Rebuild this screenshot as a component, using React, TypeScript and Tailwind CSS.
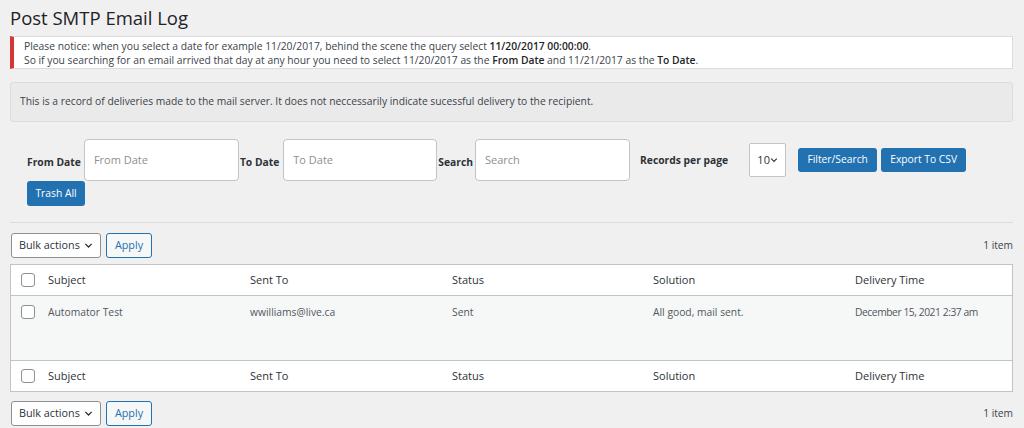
import type { ReactNode } from 'react';

const font = { fontFamily: '"Open Sans", "Noto Sans", Arial, sans-serif' };

function Check() {
  return (
    <span className="block w-[14px] h-[14px] rounded-[3px] border border-[#8c8f94] bg-white" />
  );
}

function Chevron() {
  return (
    <svg width="9" height="9" viewBox="0 0 10 10" className="ml-[4px]">
      <path d="M1.5 3.2 5 6.7 8.5 3.2" fill="none" stroke="#2c3338" strokeWidth="1.5" />
    </svg>
  );
}

function BulkBar() {
  return (
    <div className="flex items-center justify-between pr-[11px]">
      <div className="flex items-center">
        <div className="ml-[1px] h-[25px] w-[90px] flex items-center whitespace-nowrap px-[7px] border border-[#8c8f94] rounded-[3px] bg-white text-[10.8px] text-[#2c3338]">
          Bulk actions
          <Chevron />
        </div>
        <div className="ml-[5px] h-[25px] w-[46px] flex items-center justify-center border border-[#2271b1] rounded-[3px] bg-[#f6f7f7] text-[10.8px] text-[#2271b1]">
          Apply
        </div>
      </div>
      <span className="text-[10.2px] text-[#3c434a]">1 item</span>
    </div>
  );
}

function Row({ cells, body }: { cells: ReactNode[]; body?: boolean }) {
  return (
    <div
      className={
        'grid grid-cols-[27px_202px_202px_201px_202px_1fr] ' +
        (body
          ? 'h-[64px] items-start pt-[9px] bg-[#f6f7f7] text-[10.3px] text-[#50575e]'
          : 'h-[30px] items-center bg-white text-[11px] text-[#2c3338]')
      }
    >
      <div className="pl-[10px]">
        <Check />
      </div>
      {cells.map((c, i) => (
        <div key={i} className="pl-[10px] leading-[14px] whitespace-nowrap">
          {c}
        </div>
      ))}
    </div>
  );
}

const headers = ['Subject', 'Sent To', 'Status', 'Solution', 'Delivery Time'];

export default function App() {
  return (
    <div style={font} className="w-[1024px] h-[428px] overflow-hidden bg-[#f0f0f1] text-[#3c434a]">
      <h1 className="pl-[10px] pt-[5px] text-[18.5px] leading-[26px] text-[#1d2327]">Post SMTP Email Log</h1>

      {/* notice */}
      <div className="mt-[5px] ml-[10px] w-[1003px] h-[33px] bg-white border border-[#dcdcde] border-l-[4px] border-l-[#d63638] pl-[10px] pt-[2px] text-[10.3px] leading-[14px] text-[#3c434a]">
        <div>
          Please notice: when you select a date for example 11/20/2017, behind the scene the query select{' '}
          <b className="font-semibold text-[#1d2327]">11/20/2017 00:00:00</b>.
        </div>
        <div>
          So if you searching for an email arrived that day at any hour you need to select 11/20/2017 as the{' '}
          <b className="font-semibold text-[#1d2327]">From Date</b> and 11/21/2017 as the{' '}
          <b className="font-semibold text-[#1d2327]">To Date</b>.
        </div>
      </div>

      {/* info */}
      <div className="mt-[13px] ml-[10px] w-[1003px] h-[40px] flex items-center bg-[#eaeaeb] border border-[#dcdcde] rounded-[3px] pl-[9px] text-[10.3px] text-[#3c434a]">
        This is a record of deliveries made to the mail server. It does not neccessarily indicate sucessful delivery to the recipient.
      </div>

      {/* filters */}
      <div className="mt-[17px] ml-[27px] flex flex-wrap items-center text-[10.3px]">
        <span className="mt-[5px] font-bold text-[#2c3338]">From Date</span>
        <div className="ml-[3px] w-[155px] h-[42px] flex items-center pl-[9px] bg-white border border-[#c3c4c7] rounded-[4px] text-[11px] text-[#8c8f94]">
          From Date
        </div>
        <span className="mt-[5px] ml-[1px] font-bold text-[#2c3338]">To Date</span>
        <div className="ml-[4px] w-[154px] h-[42px] flex items-center pl-[9px] bg-white border border-[#c3c4c7] rounded-[4px] text-[11px] text-[#8c8f94]">
          To Date
        </div>
        <span className="mt-[5px] ml-[1px] font-bold text-[#2c3338]">Search</span>
        <div className="ml-[2px] w-[155px] h-[42px] flex items-center pl-[9px] bg-white border border-[#c3c4c7] rounded-[4px] text-[11px] text-[#8c8f94]">
          Search
        </div>
        <span className="mt-[2px] ml-[10px] font-bold text-[#2c3338]">Records per page</span>
        <div className="ml-[21px] w-[37px] h-[34px] flex items-center justify-center bg-white border border-[#c3c4c7] rounded-[2px] text-[11px] text-[#2c3338]">
          10
          <svg width="8" height="8" viewBox="0 0 10 10">
            <path d="M1.5 3.2 5 6.7 8.5 3.2" fill="none" stroke="#2c3338" strokeWidth="1.4" />
          </svg>
        </div>
        <div className="ml-[12px] w-[79px] h-[24px] flex items-center justify-center bg-[#2271b1] rounded-[3px] text-[10.3px] text-white">
          Filter/Search
        </div>
        <div className="ml-[4px] w-[85px] h-[24px] flex items-center justify-center bg-[#2271b1] rounded-[3px] text-[10.3px] text-white">
          Export To CSV
        </div>
        <div className="basis-full h-0" />
        <div className="w-[58px] h-[25px] flex items-center justify-center bg-[#2271b1] rounded-[3px] text-[10.3px] text-white">
          Trash All
        </div>
      </div>

      <div className="mt-[16px] ml-[10px] w-[1003px] h-px bg-[#dcdcde]" />

      <div className="mt-[10px] ml-[10px]">
        <BulkBar />
      </div>

      {/* table */}
      <div className="mt-[6px] ml-[10px] w-[1003px] border border-[#c3c4c7] bg-white">
        <div className="border-b border-[#c3c4c7]">
          <Row cells={headers} />
        </div>
        <div className="border-b border-[#c3c4c7]">
          <Row
            body
            cells={[
              'Automator Test',
              'wwilliams@live.ca',
              'Sent',
              'All good, mail sent.',
              <span className="tracking-[-0.45px]">December 15, 2021 2:37 am</span>,
            ]}
          />
        </div>
        <Row cells={headers} />
      </div>

      <div className="mt-[9px] ml-[10px]">
        <BulkBar />
      </div>
    </div>
  );
}
